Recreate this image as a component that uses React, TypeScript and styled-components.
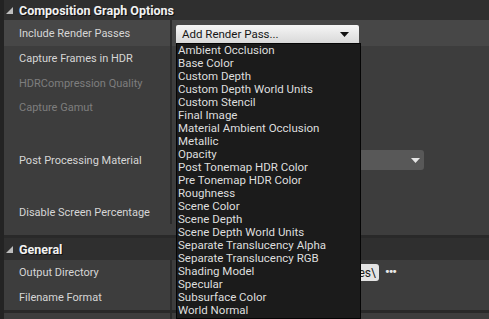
import React from "react";
import styled, { createGlobalStyle } from "styled-components";

const GlobalStyle = createGlobalStyle`
  html, body {
    margin: 0;
    padding: 0;
    background: #3d3d3d;
    overflow: hidden;
  }
  body {
    font-family: Roboto, "Liberation Sans", sans-serif;
    font-size: 11px;
  }
`;

const Panel = styled.div`
  width: 489px;
  height: 319px;
  overflow: hidden;
  display: flex;
  flex-direction: column;
  background: #3d3d3d;
  border-left: 4px solid #232323;
  box-sizing: border-box;
`;

const Category = styled.div<{ $h: number }>`
  height: ${(p) => p.$h}px;
  flex-shrink: 0;
  display: flex;
  align-items: center;
  gap: 5px;
  padding-left: 2px;
  background: #2f2f2f;
  color: #f2f2f2;
  font-size: 12.5px;
  font-weight: bold;
  text-shadow: 1px 1px 0 #111;
  svg {
    display: block;
    margin-top: 1px;
  }
`;

const Row = styled.div<{ $h: number; $hover?: boolean; $pb?: number }>`
  height: ${(p) => p.$h}px;
  flex-shrink: 0;
  display: grid;
  grid-template-columns: 168px 1fr;
  background: ${(p) => (p.$hover ? "#474747" : "#3d3d3d")};
  box-sizing: border-box;
  padding-bottom: ${(p) => p.$pb ?? 0}px;
`;

const Label = styled.div<{ $dim?: boolean }>`
  display: flex;
  align-items: center;
  padding-left: 15px;
  color: ${(p) => (p.$dim ? "#7e7e7e" : "#d6d6d6")};
  border-right: 2px solid #2a2a2a;
  white-space: nowrap;
`;

const Value = styled.div`
  display: flex;
  align-items: center;
  gap: 6px;
  padding-left: 4px;
  min-width: 0;
`;

const Separator = styled.div<{ $h: number }>`
  height: ${(p) => p.$h}px;
  flex-shrink: 0;
  background: #292929;
`;

const Combo = styled.div`
  position: relative;
  align-self: flex-start;
  margin-top: 5px;
`;

const ComboButton = styled.div`
  width: 183px;
  height: 18px;
  box-sizing: border-box;
  display: flex;
  align-items: center;
  justify-content: space-between;
  padding: 0 10px 0 6px;
  background: linear-gradient(#f6f6f6, #d9d9d9);
  border-radius: 2px 2px 0 0;
  color: #161616;
  font-size: 11.5px;
`;

const ComboList = styled.ul`
  position: absolute;
  top: 18px;
  left: 0;
  width: 185px;
  height: 276px;
  margin: 0;
  padding: 0;
  list-style: none;
  background: #1b1b1b;
  border: 1px solid #050505;
  box-sizing: border-box;
  z-index: 5;
`;

const ComboItem = styled.li`
  height: 13px;
  line-height: 13px;
  padding-left: 1px;
  color: #dedede;
  font-size: 11.5px;
  white-space: nowrap;
`;

const AssetPicker = styled.div`
  width: 248px;
  height: 20px;
  display: flex;
  align-items: center;
  justify-content: flex-end;
  padding-right: 4px;
  box-sizing: border-box;
  background: #585858;
  border-radius: 3px;
`;

const TextBox = styled.div`
  width: 203px;
  height: 17px;
  box-sizing: border-box;
  display: flex;
  align-items: center;
  justify-content: flex-end;
  padding-right: 3px;
  background: #e4e4e4;
  border-radius: 3px;
  color: #1a1a1a;
  font-size: 12px;
  overflow: hidden;
  white-space: nowrap;
`;

const Browse = styled.span`
  color: #e8e8e8;
  font-size: 13px;
  font-weight: bold;
  letter-spacing: -1px;
  margin-top: -2px;
`;

const passes = [
  "Ambient Occlusion",
  "Base Color",
  "Custom Depth",
  "Custom Depth World Units",
  "Custom Stencil",
  "Final Image",
  "Material Ambient Occlusion",
  "Metallic",
  "Opacity",
  "Post Tonemap HDR Color",
  "Pre Tonemap HDR Color",
  "Roughness",
  "Scene Color",
  "Scene Depth",
  "Scene Depth World Units",
  "Separate Translucency Alpha",
  "Separate Translucency RGB",
  "Shading Model",
  "Specular",
  "Subsurface Color",
  "World Normal",
];

function Arrow() {
  return (
    <svg width="8" height="8" viewBox="0 0 8 8">
      <polygon points="7,0 7,7 0,7" fill="#bdbdbd" />
    </svg>
  );
}

function DownTri({ color }: { color: string }) {
  return (
    <svg width="9" height="5" viewBox="0 0 9 5">
      <polygon points="0,0 9,0 4.5,5" fill={color} />
    </svg>
  );
}

export default function App(): React.ReactElement {
  return (
    <>
      <GlobalStyle />
      <Panel>
        <Category $h={20}>
          <Arrow />
          Composition Graph Options
        </Category>
        <Row $h={26} $hover>
          <Label>Include Render Passes</Label>
          <Value>
            <Combo>
              <ComboButton>
                Add Render Pass...
                <DownTri color="#111" />
              </ComboButton>
              <ComboList>
                {passes.map((p) => (
                  <ComboItem key={p}>{p}</ComboItem>
                ))}
              </ComboList>
            </Combo>
          </Value>
        </Row>
        <Row $h={25}>
          <Label>Capture Frames in HDR</Label>
          <Value />
        </Row>
        <Row $h={24}>
          <Label $dim>HDRCompression Quality</Label>
          <Value />
        </Row>
        <Row $h={25}>
          <Label $dim>Capture Gamut</Label>
          <Value />
        </Row>
        <Row $h={80}>
          <Label>Post Processing Material</Label>
          <Value>
            <AssetPicker>
              <DownTri color="#e6e6e6" />
            </AssetPicker>
          </Value>
        </Row>
        <Row $h={35} $pb={11}>
          <Label>Disable Screen Percentage</Label>
          <Value />
        </Row>
        <Separator $h={3} />
        <Category $h={22}>
          <Arrow />
          General
        </Category>
        <Row $h={25}>
          <Label>Output Directory</Label>
          <Value>
            <TextBox>{"{project_dir}\\Saved\\Movies\\"}</TextBox>
            <Browse>•••</Browse>
          </Value>
        </Row>
        <Row $h={25}>
          <Label>Filename Format</Label>
          <Value />
        </Row>
        <Separator $h={3} />
        <Row $h={25}>
          <Label />
          <Value />
        </Row>
      </Panel>
    </>
  );
}
